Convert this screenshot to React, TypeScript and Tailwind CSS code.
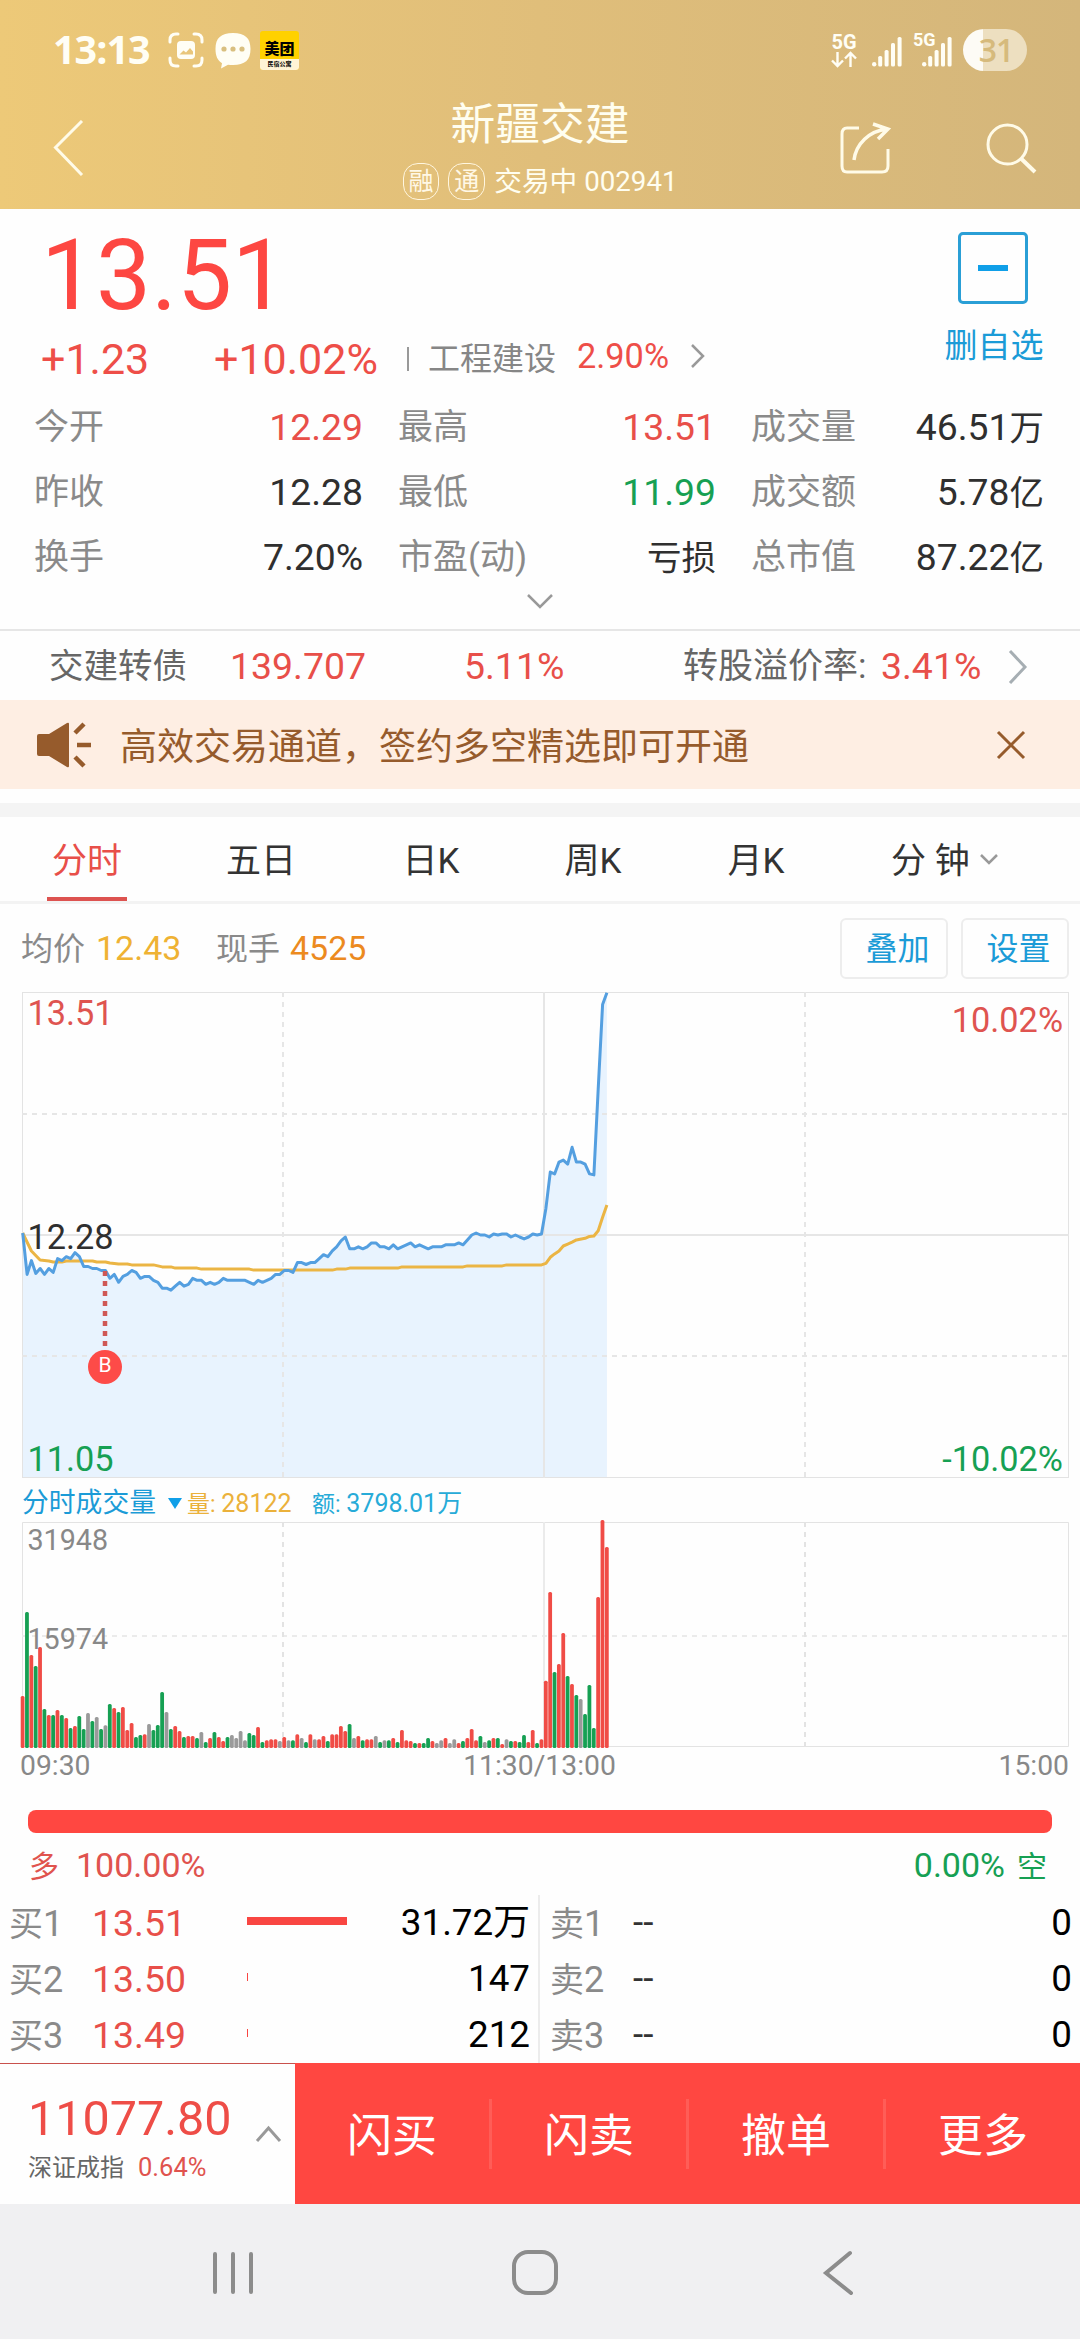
import { ReactNode } from 'react';

const RED = '#f04c46';
const GREEN = '#16a053';
const GREY = '#9a9a9a';

interface Stat {
  label: string;
  value: string;
  tone?: string;
}

const stats: Stat[][] = [
  [
    { label: '今开', value: '12.29', tone: 'text-[#e84f49]' },
    { label: '最高', value: '13.51', tone: 'text-[#e84f49]' },
    { label: '成交量', value: '46.51万' },
  ],
  [
    { label: '昨收', value: '12.28' },
    { label: '最低', value: '11.99', tone: 'text-[#16a053]' },
    { label: '成交额', value: '5.78亿' },
  ],
  [
    { label: '换手', value: '7.20%' },
    { label: '市盈(动)', value: '亏损' },
    { label: '总市值', value: '87.22亿' },
  ],
];

// One price per trading minute, from 09:30 on
const prices = [
  12.29, 12.08, 12.15, 12.085, 12.11, 12.08, 12.11, 12.09, 12.16, 12.15,
  12.17, 12.16, 12.19, 12.17, 12.12, 12.12, 12.11, 12.11, 12.1, 12.1,
  12.06, 12.08, 12.04, 12.07, 12.08, 12.1, 12.09, 12.06, 12.07, 12.07,
  12.05, 12.04, 12.01, 12.01, 12.0, 12.02, 12.04, 12.02, 12.03, 12.06,
  12.05, 12.05, 12.03, 12.04, 12.03, 12.04, 12.06, 12.05, 12.05, 12.05,
  12.05, 12.05, 12.04, 12.03, 12.05, 12.04, 12.05, 12.06, 12.08, 12.08,
  12.1, 12.1, 12.09, 12.14, 12.14, 12.13, 12.14, 12.14, 12.16, 12.18,
  12.17, 12.2, 12.22, 12.25, 12.27, 12.21, 12.21, 12.22, 12.21, 12.22,
  12.24, 12.24, 12.22, 12.22, 12.21, 12.23, 12.21, 12.22, 12.23, 12.24,
  12.22, 12.23, 12.22, 12.21, 12.22, 12.22, 12.22, 12.23, 12.23, 12.23,
  12.24, 12.23, 12.255, 12.28, 12.29, 12.28, 12.28, 12.27, 12.285, 12.28,
  12.285, 12.285, 12.27, 12.28, 12.27, 12.26, 12.27, 12.285, 12.28, 12.285,
  12.415, 12.6, 12.59, 12.65, 12.66, 12.64, 12.725, 12.65, 12.65, 12.64,
  12.59, 12.585, 13.02, 13.45, 13.51,
];

// [minute, average price]
const average: [number, number][] = [
  [0, 12.29], [2, 12.199], [4, 12.153], [6, 12.148], [7, 12.143], [9, 12.143],
  [10, 12.148], [16, 12.148], [17, 12.143], [19, 12.143], [20, 12.138], [22, 12.133],
  [24, 12.133], [25, 12.128], [30, 12.128], [32, 12.118], [34, 12.118], [35, 12.112],
  [40, 12.112], [41, 12.107], [52, 12.107], [53, 12.102], [71, 12.102], [72, 12.107],
  [74, 12.107], [75, 12.112], [86, 12.112], [87, 12.118], [101, 12.118], [102, 12.123],
  [110, 12.123], [111, 12.128], [119, 12.128], [120, 12.136], [121, 12.167], [122, 12.184],
  [123, 12.199], [124, 12.224], [125, 12.234], [126, 12.244], [127, 12.255], [129, 12.263],
  [130, 12.273], [131, 12.275], [132, 12.302], [133, 12.37], [134, 12.432],
];

const volumes = [
  156, 408, 279, 246, 303, 117, 99, 99, 114, 99,
  90, 60, 66, 96, 57, 105, 81, 93, 57, 68,
  132, 120, 108, 123, 54, 75, 33, 39, 41, 72,
  54, 69, 168, 108, 57, 66, 51, 33, 36, 36,
  30, 48, 18, 30, 48, 33, 21, 33, 39, 30,
  51, 23, 45, 39, 63, 18, 23, 26, 26, 21,
  33, 23, 23, 41, 30, 18, 41, 26, 26, 36,
  21, 41, 41, 66, 51, 72, 30, 36, 23, 26,
  26, 36, 18, 23, 23, 30, 18, 54, 23, 21,
  15, 15, 15, 30, 21, 15, 23, 30, 15, 26,
  15, 21, 30, 57, 23, 36, 18, 23, 30, 30,
  12, 26, 21, 21, 18, 39, 18, 54, 15, 26,
  202, 468, 228, 252, 345, 216, 192, 159, 147, 102,
  189, 60, 453, 684, 603,
];

// r = up, g = down, x = unchanged
const volumeTones =
  'rgrgrgrgrg' + 'rgrggxgxgx' + 'grgrrrggrx' + 'gggxgrrgrr' + 'gxgrgrrgxx' +
  'xxggrgrrrx' + 'rxgrxgrxrr' + 'grrrrgxrgr' + 'rxgxgrgrrr' + 'grggrxxrxx' +
  'rgrrrgxgrg' + 'rxgrggrrgr' + 'rrgrrgrgxg' + 'ggrrr';

const toneColors: Record<string, string> = { r: RED, g: GREEN, x: GREY };

const minuteX = (m: number) => 22.7 + m * 4.36;
const priceY = (p: number) => 255 - (p - 12.28) * 197;

const tabs = [
  { label: '分时', box: 'w-[80px] ml-[47px]', active: true },
  { label: '五日', box: 'w-[80px] ml-[94px]' },
  { label: '日K', box: 'w-[80px] ml-[90px]' },
  { label: '周K', box: 'w-[80px] ml-[82px]' },
  { label: '月K', box: 'w-[80px] ml-[83px]' },
];

const bids = [
  { name: '买1', price: '13.51', volume: '31.72万', bar: 'w-[100px]' },
  { name: '买2', price: '13.50', volume: '147', bar: 'w-px' },
  { name: '买3', price: '13.49', volume: '212', bar: 'w-px' },
];

const asks = ['卖1', '卖2', '卖3'];

const Badge = ({ children }: { children: ReactNode }) => (
  <span className="flex h-[37px] w-[37px] items-center justify-center rounded-[15px] border border-[#fff6df] text-[25px] text-[#fff8e6]">
    {children}
  </span>
);

const SignalBars = () => (
  <svg width="30" height="30" viewBox="0 0 30 30" fill="#fffef5">
    <circle cx="2.2" cy="27.3" r="2.2" />
    <rect x="6.2" y="19" width="4" height="10.5" rx="1.6" />
    <rect x="12.6" y="13" width="4" height="16.5" rx="1.6" />
    <rect x="19" y="6" width="4" height="23.5" rx="1.6" />
    <rect x="25.6" y="0" width="4" height="29.5" rx="1.6" />
  </svg>
);

const StatusBar = () => (
  <div className="flex h-[100px] items-center text-[#fffef5]">
    <span className="ml-[53px] w-[100px] font-['Open_Sans'] text-[39.5px] font-bold tracking-[-1px]">13:13</span>
    <svg className="ml-[15px]" width="36" height="36" viewBox="0 0 36 36" fill="none">
      <path
        d="M2 10V8q0-6 6-6h2M26 2h2q6 0 6 6v2M34 26v2q0 6-6 6h-2M10 34H8q-6 0-6-6v-2"
        stroke="#fffef5"
        strokeWidth="3"
        strokeLinecap="round"
      />
      <rect x="9" y="9" width="18" height="18" rx="4" fill="#fffef5" />
      <path d="M11.5 22.5l4-4 2.5 2 4-4.5 3 3.5v3z" fill="#e9c67a" />
    </svg>
    <svg className="ml-[11px]" width="36" height="37" viewBox="0 0 36 37">
      <path
        d="M18 1C6 1 .5 6 .5 17c0 7 2 11.5 6.5 14.2L6 36.5l7-3.8c1.6.3 3.2.3 5 .3 12 0 17.5-5 17.5-16S30 1 18 1z"
        fill="#fffef5"
      />
      <g fill="#d9bf80">
        <circle cx="9" cy="17" r="2.6" />
        <circle cx="18" cy="17" r="2.6" />
        <circle cx="27" cy="17" r="2.6" />
      </g>
    </svg>
    <span className="ml-[9px] flex h-[39px] w-[39px] flex-col overflow-hidden rounded-[3px] bg-[#ffd100] text-center text-black">
      <span className="mt-[8px] h-[20px] text-[15px] leading-[20px] font-black">美团</span>
      <span className="h-[11px] bg-[#fff4d6] text-[6px] leading-[9px] font-bold">民宿公寓</span>
    </span>
    <div className="mr-[53px] ml-auto flex items-center">
      <span className="flex w-[26px] flex-col items-center">
        <span className="text-[20px] leading-[18px] font-bold">5G</span>
        <svg width="26" height="17" viewBox="0 0 26 17" fill="none" stroke="#fffef5" strokeWidth="2.4">
          <path d="M6.5 1v14M1 9.5l5.5 5.5 5.5-5.5M19.5 16V2M14 7.5L19.5 2 25 7.5" />
        </svg>
      </span>
      <span className="mt-[3px] ml-[15px]">
        <SignalBars />
      </span>
      <span className="relative mt-[3px] ml-[20px]">
        <SignalBars />
        <span className="absolute -top-[6px] -left-[9px] text-[18px] leading-[18px] font-bold">5G</span>
      </span>
      <span className="ml-[11px] flex h-[42px] w-[64px] items-center justify-center rounded-full bg-linear-[90deg,#fdfbf5_20px,#eddfc0_20px] pl-[2px] font-['Open_Sans'] text-[32px] font-semibold tracking-[-1px] text-[#d6ba7c]">
        31
      </span>
    </div>
  </div>
);

const TitleBar = () => (
  <div className="flex h-[109px] items-start">
    <svg className="mt-[20px] ml-[53px]" width="32" height="56" viewBox="0 0 32 56" fill="none">
      <path d="M29 1L2.5 27.5 29 55" stroke="#fffbe8" strokeWidth="3" />
    </svg>
    <div className="ml-[240px] flex w-[430px] flex-col items-center text-[#fffef0]">
      <h1 className="mt-[2px] h-[46px] text-[44.8px] leading-[46px]">新疆交建</h1>
      <div className="mt-[15px] flex h-[37px] w-[275px] items-center whitespace-nowrap">
        <Badge>融</Badge>
        <span className="w-[9px]" />
        <Badge>通</Badge>
        <span className="ml-[9px] text-[27.7px]">交易中 002941</span>
      </div>
    </div>
    <svg className="mt-[22px] ml-[84px]" width="52" height="54" viewBox="0 0 52 54" fill="none" stroke="#fffbe8" strokeWidth="3">
      <path d="M20 6H8Q3 6 3 12V44q0 6 5 6H43q6 0 6-6V27" />
      <path d="M15 38C17 22 30 9 48 7M34 2l15 5-10 10" strokeWidth="3.5" />
    </svg>
    <svg className="mt-[22px] ml-[95px]" width="52" height="54" viewBox="0 0 52 54" fill="none" stroke="#fffbe8">
      <circle cx="21.5" cy="22.5" r="19.5" strokeWidth="3" />
      <path d="M35 36.5L49 50" strokeWidth="4" />
    </svg>
  </div>
);

const Quote = () => (
  <section className="flex h-[422px] flex-col border-b-2 border-[#e6e6e6]">
    <div className="flex h-[183px] justify-between">
      <div>
        <div className="mt-[18px] ml-[41px] h-[98px] text-[98px] leading-[98px] text-[#fd4742]">13.51</div>
        <div className="mt-[12px] flex h-[44px] items-center text-[43px] text-[#ee4e48]">
          <span className="ml-[41px] w-[173px]">+1.23</span>
          <span className="w-[193px]">+10.02%</span>
          <span className="h-[24px] w-[2px] bg-[#999]" />
          <span className="ml-[19px] text-[32px] text-[#868686]">工程建设</span>
          <span className="ml-[21px] pb-[6px] text-[34.3px]">2.90%</span>
          <svg className="mb-[6px] ml-[21px]" width="16" height="26" viewBox="0 0 16 26" fill="none">
            <path d="M2 2l11 11L2 24" stroke="#999" strokeWidth="2.5" />
          </svg>
        </div>
      </div>
      <div className="mr-[37px] flex w-[100px] flex-col items-center text-[#1b9bd7]">
        <span className="mt-[23px] flex h-[72px] w-[70px] items-center justify-center rounded-[5px] border-[3px] border-[#2a9fd6]">
          <span className="h-[6px] w-[30px] bg-[#109fe8]" />
        </span>
        <span className="mt-[22px] ml-[2px] text-[33px] leading-[40px] whitespace-nowrap">删自选</span>
      </div>
    </div>
    <div className="mt-[3px] flex flex-col">
      {stats.map((row, i) => (
        <div key={i} className="flex h-[65px] items-center pl-[34px]">
          {row.map((s, j) => (
            <div
              key={s.label}
              className={
                'flex items-center justify-between whitespace-nowrap ' +
                (j === 0 ? 'w-[329px]' : j === 1 ? 'ml-[35px] w-[318px]' : 'ml-[35px] w-[293px]')
              }
            >
              <span className="text-[35px] text-[#8a8a8a]">{s.label}</span>
              <span className={'text-[37.3px] ' + (s.tone || 'text-[#2f2f2f]')}>
                {s.value.replace(/[万亿]|亏损/, '')}
                <span className="text-[34.5px]">{s.value.match(/[万亿]|亏损/)?.[0]}</span>
              </span>
            </div>
          ))}
        </div>
      ))}
    </div>
    <svg className="mt-[2px] ml-[526px]" width="28" height="18" viewBox="0 0 28 18" fill="none">
      <path d="M2 3l12 12L26 3" stroke="#999" strokeWidth="2.5" />
    </svg>
  </section>
);

const BondRow = () => (
  <div className="flex h-[69px] items-center pt-[2px] text-[37.4px] whitespace-nowrap text-[#e84f49]">
    <span className="ml-[49px] w-[181px] text-[34.5px] text-[#666]">交建转债</span>
    <span className="w-[234px]">139.707</span>
    <span className="w-[219px]">5.11%</span>
    <span className="w-[198px] text-[35px] text-[#666]">转股溢价率:</span>
    <span className="w-[126px]">3.41%</span>
    <svg width="22" height="36" viewBox="0 0 22 36" fill="none">
      <path d="M3 2l15 16L3 34" stroke="#a6aeb3" strokeWidth="3" />
    </svg>
  </div>
);

const Notice = () => (
  <div className="flex h-[89px] items-center bg-[#feeee3] text-[#965b2c]">
    <svg className="ml-[36px]" width="56" height="46" viewBox="0 0 56 46" fill="none" stroke="#965b2c" strokeWidth="4.5">
      <path d="M1 14q0-2 2-2h10L31 1q2-1 2 1v42q0 2-2 1L13 34H3q-2 0-2-2z" fill="#965b2c" stroke="none" />
      <path d="M39 11l9-9M41 23h14M39 35l9 9" />
    </svg>
    <span className="ml-[28px] pt-[5px] text-[37px] whitespace-nowrap">高效交易通道，签约多空精选即可开通</span>
    <svg className="mr-[54px] ml-auto" width="30" height="30" viewBox="0 0 30 30" fill="none">
      <path d="M2 2l26 26M28 2L2 28" stroke="#965b2c" strokeWidth="3" />
    </svg>
  </div>
);

const Tabs = () => (
  <nav className="flex h-[87px] items-stretch border-b-[3px] border-[#f3f3f3] text-[35px] whitespace-nowrap text-[#333]">
    {tabs.map((t) => (
      <div
        key={t.label}
        className={
          'flex items-center justify-center border-b-4 pt-[9px] ' +
          t.box +
          (t.active ? ' border-[#dd5350] text-[#e84f49]' : ' border-transparent')
        }
      >
        {t.label}
      </div>
    ))}
    <div className="ml-[95px] flex items-center pt-[5px]">
      分 钟
      <svg className="mb-[4px] ml-[9px]" width="20" height="14" viewBox="0 0 20 14" fill="none">
        <path d="M2 2l8 8 8-8" stroke="#999" strokeWidth="2.5" />
      </svg>
    </div>
  </nav>
);

const ChartToolbar = () => (
  <div className="flex h-[88px] items-center text-[34px] whitespace-nowrap">
    <span className="ml-[21px] w-[75px] pt-[2px] text-[32px] text-[#8a8a8a]">均价</span>
    <span className="w-[120px] text-[#efb233]">12.43</span>
    <span className="w-[74px] pt-[2px] text-[32px] text-[#8a8a8a]">现手</span>
    <span className="text-[#ec8a1f]">4525</span>
    <button className="ml-auto h-[61px] w-[108px] rounded-[6px] border-2 border-[#ededed] pt-[2px] pl-[7px] text-[32px] text-[#1b9bd7]">
      叠加
    </button>
    <button className="mr-[11px] ml-[13px] h-[61px] w-[108px] rounded-[6px] border-2 border-[#ededed] pt-[2px] pl-[7px] text-[32px] text-[#1b9bd7]">
      设置
    </button>
  </div>
);

const PriceChart = () => {
  const line = prices.map((p, i) => `${minuteX(i).toFixed(1)},${priceY(p).toFixed(1)}`).join(' ');
  const avg = average.map(([m, p]) => `${minuteX(m).toFixed(1)},${priceY(p).toFixed(1)}`).join(' ');
  return (
    <svg className="block" width="1080" height="500" viewBox="0 8 1080 500" fontSize="34.3" fill="none">
      <polygon points={`22.7,497 ${line} ${minuteX(134)},497`} fill="#e8f3fe" />
      <rect x="22.5" y="12.5" width="1046" height="485" stroke="#e3e3e3" />
      <g stroke="#e6e6e6" strokeWidth="2">
        <path d="M22 255H1069M544 12V498" />
        <path d="M22 134H1069M22 376H1069M283 12V498M805 12V498" strokeDasharray="5 5" />
      </g>
      <polyline points={avg} stroke="#ebb544" strokeWidth="3" strokeLinejoin="round" />
      <polyline points={line} stroke="#549fe0" strokeWidth="3" strokeLinejoin="round" />
      <path d="M105 291V366" stroke="#cf5856" strokeWidth="4.5" strokeDasharray="5 5" />
      <circle cx="105" cy="387" r="17" fill="#fd4b48" />
      <text x="105" y="392" fill="#fff" fontSize="21" textAnchor="middle">B</text>
      <text x="27.5" y="45" fill="#df5450">13.51</text>
      <text x="27.5" y="269" fill="#2f2f2f">12.28</text>
      <text x="27.5" y="491" fill={GREEN}>11.05</text>
      <text x="1063" y="52" fill="#df5450" textAnchor="end">10.02%</text>
      <text x="1063" y="491" fill={GREEN} textAnchor="end">-10.02%</text>
    </svg>
  );
};

const VolumeChart = () => (
  <>
    <div className="flex h-[31px] items-center pt-[2px] text-[25px] whitespace-nowrap">
      <span className="ml-[22px] w-[146px] text-[26.8px] text-[#1b9bd7]">分时成交量</span>
      <svg width="14" height="12" viewBox="0 0 14 12">
        <path d="M0 0h14L7 11z" fill="#109fe8" />
      </svg>
      <span className="ml-[5px] w-[125px] text-[#ebb13b]">
        <span className="text-[23px]">量: </span>
        28122
      </span>
      <span className="text-[#27abd8]">
        <span className="text-[23px]">额: </span>
        3798.01万
      </span>
    </div>
    <svg className="block" width="1080" height="230" viewBox="0 0 1080 230" fontSize="28.7" fill="none">
      <path d="M22.5 229V4.5H1068.5V228.5H22" stroke="#e3e3e3" />
      <g stroke="#ebebeb" strokeWidth="2">
        <path d="M544 4V229" />
        <path d="M22 118H1069" strokeDasharray="5 5" />
        <path d="M283 4V229M805 4V229" stroke="#e3e3e3" strokeDasharray="5 5" />
      </g>
      {volumes.map((v, i) => (
        <rect key={i} x={minuteX(i) - 2} y={230 - v / 3} width="3.8" height={v / 3} rx="1.5" fill={toneColors[volumeTones[i]]} />
      ))}
      <text x="27.5" y="32" fill="#888">31948</text>
      <text x="27.5" y="131" fill="#888">15974</text>
    </svg>
    <div className="flex h-[35px] items-center justify-between pt-[2px] pr-[11px] pl-[20px] text-[28.3px] text-[#888]">
      <span className="w-[70px]">09:30</span>
      <span>11:30/13:00</span>
      <span className="w-[80px] text-right">15:00</span>
    </div>
  </>
);

const OrderBook = () => (
  <>
    <div className="mx-[28px] mt-[27px] h-[23px] rounded-[8px] bg-[#ff4741]" />
    <div className="flex h-[62px] items-center justify-between pt-[1px] pr-[33px] pl-[29px] text-[34px]">
      <span className="text-[#e0534e]">
        <span className="mr-[17px] text-[30px]">多</span>
        100.00%
      </span>
      <span className="text-[#16a053]">
        0.00%
        <span className="ml-[12px] text-[30px]">空</span>
      </span>
    </div>
    <div className="flex h-[168px] text-[36.8px] text-black">
      <div className="w-[540px] border-r-2 border-[#ececec]">
        {bids.map((b) => (
          <div key={b.name} className="flex h-[56px] items-center pt-[1px]">
            <span className="ml-[9px] w-[83px] text-[36px] text-[#8a8a8a]">
              <span className="text-[34px]">{b.name[0]}</span>
              {b.name[1]}
            </span>
            <span className="w-[155px] text-[37.4px] text-[#e84f49]">{b.price}</span>
            <span className={'mb-[5px] h-[8px] bg-[#f94642] ' + b.bar} />
            <span className="mr-[8px] ml-auto">{b.volume}</span>
          </div>
        ))}
      </div>
      <div className="flex-1">
        {asks.map((name) => (
          <div key={name} className="flex h-[56px] items-center pt-[1px]">
            <span className="ml-[10px] w-[83px] text-[36px] text-[#8a8a8a]">
              <span className="text-[34px]">{name[0]}</span>
              {name[1]}
            </span>
            <span className="text-[#333]">--</span>
            <span className="mr-[8px] ml-auto">0</span>
          </div>
        ))}
      </div>
    </div>
  </>
);

const ActionBar = () => (
  <div className="flex h-[141px]">
    <div className="flex w-[295px] items-center border-t border-[#c9504c]">
      <div className="ml-[28px] w-[227px] pt-[10px] whitespace-nowrap">
        <div className="h-[58px] text-[48.5px] leading-[58px] text-[#ee4d47]">11077.80</div>
        <div className="flex h-[40px] items-center text-[25.5px] text-[#e0534e]">
          <span className="mr-[14px] text-[24px] text-[#666]">深证成指</span>
          0.64%
        </div>
      </div>
      <svg width="28" height="20" viewBox="0 0 28 20" fill="none">
        <path d="M2 17L13.5 4 25 17" stroke="#999" strokeWidth="3" />
      </svg>
    </div>
    <div className="flex flex-1 items-center bg-[#ff4741] text-[45px] text-white">
      {['闪买', '闪卖', '撤单', '更多'].map((label, i) => (
        <span
          key={label}
          className={'flex h-[70px] flex-1 items-center justify-center border-[#ff5d57] pt-[5px] ' + (i < 3 ? 'border-r-[3px]' : '')}
        >
          {label}
        </span>
      ))}
    </div>
  </div>
);

const SystemNav = () => (
  <div className="flex h-[135px] bg-[#f0f0f2] pt-[46px]">
    <svg className="ml-[211px]" width="44" height="46" viewBox="0 0 44 46" fill="none" stroke="#8c8c8c" strokeWidth="4" strokeLinecap="round">
      <path d="M4 4v38M22 4v38M40 4v38" />
    </svg>
    <span className="ml-[257px] h-[45px] w-[46px] rounded-[16px] border-4 border-[#8c8c8c]" />
    <svg className="ml-[264px]" width="34" height="46" viewBox="0 0 34 46" fill="none" stroke="#8c8c8c" strokeWidth="4" strokeLinecap="round">
      <path d="M28 3L4 23 29 43" />
    </svg>
  </div>
);

const App = () => {
  return (
    <div className="flex h-[2340px] w-[1080px] flex-col overflow-hidden bg-[#fefefe] font-[Roboto,'Noto_Sans_CJK_SC',sans-serif] leading-none">
      <header className="h-[209px] bg-linear-to-r from-[#edc978] via-[#e0be7a] to-[#d4b67b]">
        <StatusBar />
        <TitleBar />
      </header>
      <Quote />
      <BondRow />
      <Notice />
      <div className="mt-[14px] h-[14px] bg-[#f4f4f4]" />
      <Tabs />
      <ChartToolbar />
      <div className="-mt-[4px] h-[500px]">
        <PriceChart />
      </div>
      <div className="-mt-[1px]">
        <VolumeChart />
      </div>
      <OrderBook />
      <ActionBar />
      <SystemNav />
    </div>
  );
};

export default App;
